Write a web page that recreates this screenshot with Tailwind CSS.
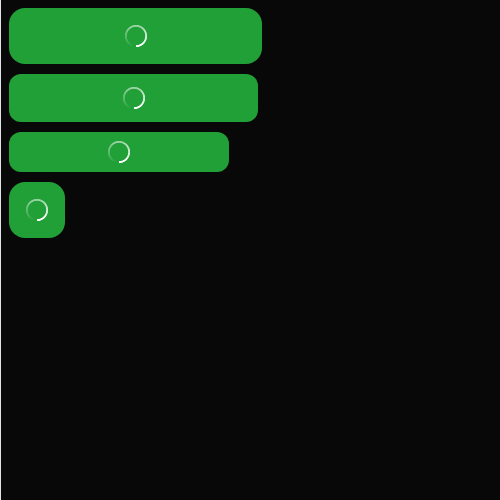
<!DOCTYPE html>
<html lang="en">
<head>
<meta charset="utf-8">
<title>Loading buttons</title>
<script src="https://cdn.jsdelivr.net/npm/@tailwindcss/browser@4"></script>
</head>
<body class="h-screen overflow-hidden border-l border-[#e0e3e8] bg-[#080808]">
<main class="flex flex-col items-start gap-2.5 p-2">
  <button aria-label="Loading" class="flex h-14 w-[253px] items-center justify-center rounded-2xl bg-[#21a038]">
    <span class="size-6 rounded-full bg-[conic-gradient(from_180deg,transparent_0deg,transparent_15deg,rgba(255,255,255,0.5)_150deg,rgba(255,255,255,0.55)_210deg,rgba(255,255,255,0.8)_275deg,white_330deg,white_360deg)] [mask:radial-gradient(circle,transparent_8.8px,black_9.6px,black_10.7px,transparent_11.5px)]"></span>
  </button>
  <button aria-label="Loading" class="flex h-12 w-[249px] items-center justify-center rounded-xl bg-[#21a038]">
    <span class="size-6 rounded-full bg-[conic-gradient(from_180deg,transparent_0deg,transparent_15deg,rgba(255,255,255,0.5)_150deg,rgba(255,255,255,0.55)_210deg,rgba(255,255,255,0.8)_275deg,white_330deg,white_360deg)] [mask:radial-gradient(circle,transparent_8.8px,black_9.6px,black_10.7px,transparent_11.5px)]"></span>
  </button>
  <button aria-label="Loading" class="flex h-10 w-[220px] items-center justify-center rounded-xl bg-[#21a038]">
    <span class="size-6 rounded-full bg-[conic-gradient(from_180deg,transparent_0deg,transparent_15deg,rgba(255,255,255,0.5)_150deg,rgba(255,255,255,0.55)_210deg,rgba(255,255,255,0.8)_275deg,white_330deg,white_360deg)] [mask:radial-gradient(circle,transparent_8.8px,black_9.6px,black_10.7px,transparent_11.5px)]"></span>
  </button>
  <button aria-label="Loading" class="flex size-14 items-center justify-center rounded-2xl bg-[#21a038]">
    <span class="size-6 rounded-full bg-[conic-gradient(from_180deg,transparent_0deg,transparent_15deg,rgba(255,255,255,0.5)_150deg,rgba(255,255,255,0.55)_210deg,rgba(255,255,255,0.8)_275deg,white_330deg,white_360deg)] [mask:radial-gradient(circle,transparent_8.8px,black_9.6px,black_10.7px,transparent_11.5px)]"></span>
  </button>
</main>
</body>
</html>
